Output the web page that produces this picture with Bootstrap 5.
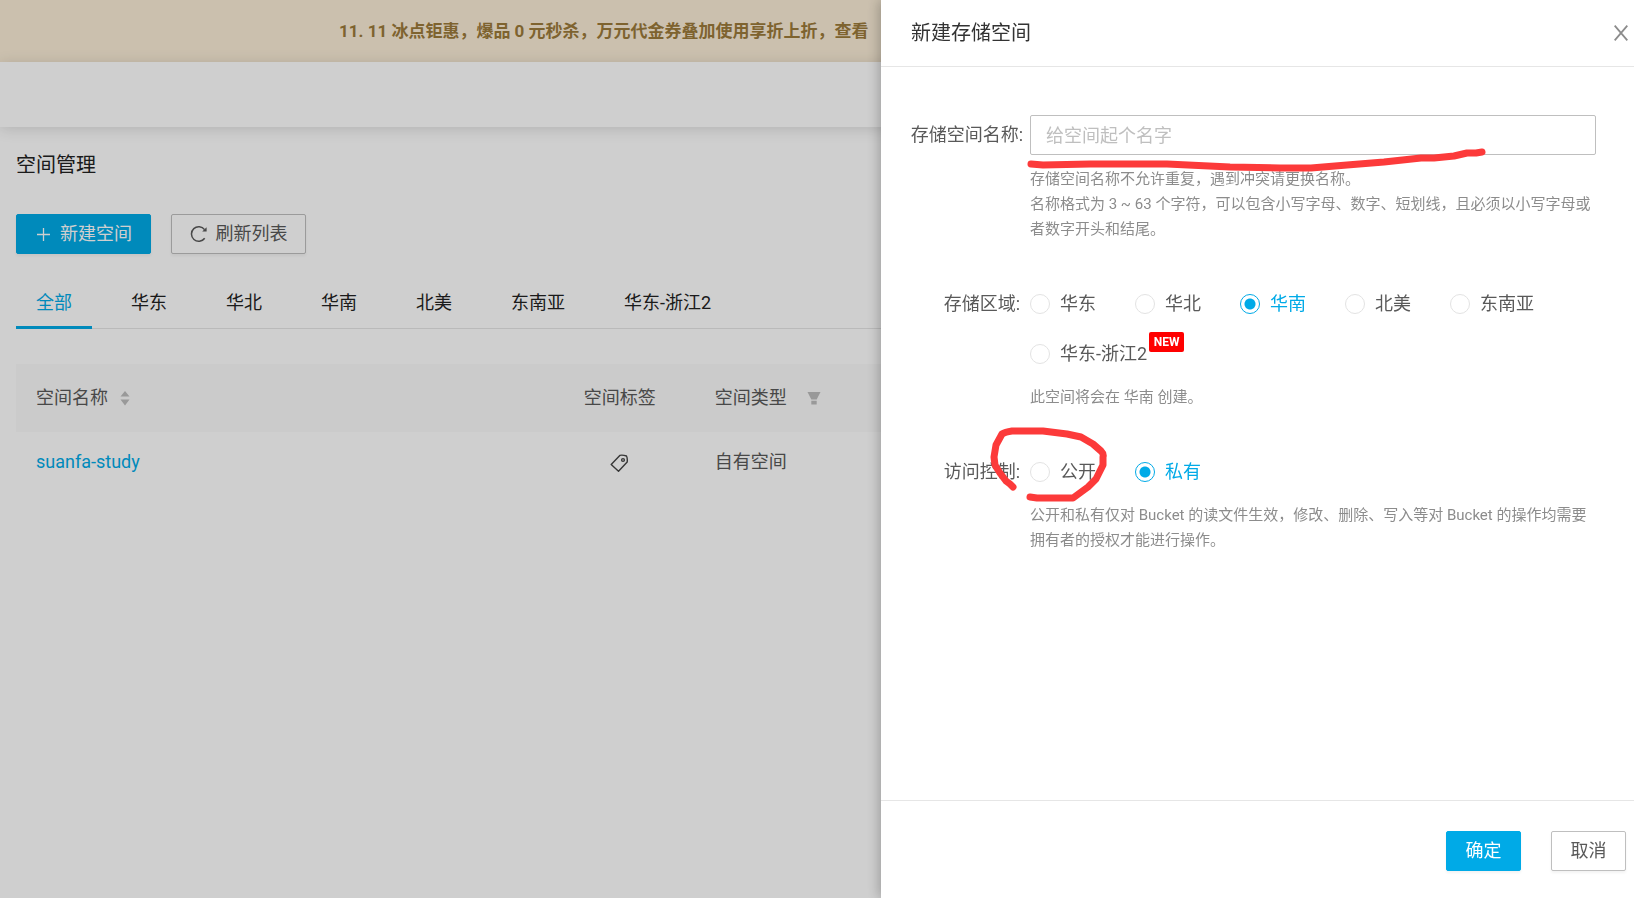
<!DOCTYPE html>
<html lang="zh-CN">
<head>
<meta charset="utf-8">
<meta name="viewport" content="width=device-width, initial-scale=1">
<title>空间管理</title>
<link href="https://cdn.jsdelivr.net/npm/bootstrap@5.3.0/dist/css/bootstrap.min.css" rel="stylesheet">
<style>
:root{--brand:#00aae7}
body{font-family:Roboto,"Noto Sans CJK SC",sans-serif;font-size:18px;line-height:26px;color:#595959;background:#fff;min-height:100vh;overflow:hidden}
.promo{height:62px;padding-left:339px;background:#faedd7;color:#9c7a3a;font-size:17px;font-weight:700}
.topbar{height:65px;box-shadow:0 2px 14px rgba(0,0,0,.14)}
.page-title{font-size:20px;line-height:28px;color:#222;font-weight:400}
.toolbar{margin-top:35px;gap:20px}
.act{height:40px;padding:0 18px;min-width:75px;border-radius:2px;font-size:18px;line-height:26px;box-shadow:0 2px 3px rgba(0,0,0,.05);white-space:nowrap}
.act-main{--bs-btn-color:#fff;--bs-btn-bg:#00aae7;--bs-btn-border-color:#00aae7}
.act-plain{--bs-btn-color:#595959;--bs-btn-bg:#fff;--bs-btn-border-color:#bfbfbf}
.tool{width:135px;padding:0}
.region-tabs{gap:19px;margin-top:23px;border-bottom:1px solid #e5e5e5}
.region-tabs .nav-link{padding:13px 20px 10px;color:#222;border-bottom:3px solid transparent;margin-bottom:-1px}
.region-tabs .nav-link.active{color:var(--brand);border-color:var(--brand)}
.buckets{table-layout:fixed;color:#595959;margin-top:35px}
.buckets th{font-weight:400;height:68px;background:#fafafa}
.buckets td{height:60px}
.buckets th,.buckets td{padding:0 20px;border:0;vertical-align:middle;color:#595959}
.col-fixed{width:150px}
.buckets a{color:var(--brand);text-decoration:none}
.offcanvas-backdrop.show{opacity:.19}
.offcanvas.drawer{--bs-offcanvas-width:753px;border:0;color:#595959;box-shadow:-2px 0 12px rgba(0,0,0,.25)}
.drawer-head{height:67px;padding:0 6px 0 30px;border-bottom:1px solid #e6e6e6}
.drawer-head h2{font-size:20px;line-height:28px;font-weight:400;color:#333}
.drawer-body{padding:48px 38px 0 29px}
.drawer-foot{padding:30px 8px 27px;gap:30px;border-top:1px solid #e6e6e6}
.fields{gap:37px}
.field-name{width:120px;padding-right:7px;text-align:right;white-space:nowrap;flex:none}
.field-name.tall{line-height:50px;padding-right:10px}
.field-name.mid{line-height:40px}
.name-box{height:40px;padding:0 15px;border:1px solid #bfbfbf;border-radius:2px;font-size:18px;color:#595959}
.name-box::placeholder{color:#bfbfbf}
.hint{font-size:15px;line-height:25px;color:#8c8c8c;margin-top:6px}
.hint.wide{margin-top:12px}
.options{column-gap:39px}
.option{height:50px;gap:10px}
.option .form-check-input{width:20px;height:20px;margin:0;border:1px solid #e3e3e3;box-shadow:none}
.option .form-check-input:checked{background:#fff radial-gradient(circle,#00aae7 5px,transparent 6px);border-color:var(--brand)}
.option .form-check-input:checked + label{color:var(--brand)}
.tag-new{margin:3px 0 0 -8px;width:35px;height:20px;border-radius:2px;background:#f00;color:#fff;font-size:12px;line-height:20px;font-weight:700;text-align:center}
.pen{position:absolute;overflow:visible;pointer-events:none;fill:none;stroke:#fc3a3a;stroke-width:7;stroke-linecap:round;stroke-linejoin:round;left:0;top:0}
</style>
</head>
<body>
<div class="promo d-flex align-items-center text-nowrap">11. 11 冰点钜惠，爆品 0 元秒杀，万元代金券叠加使用享折上折，查看</div>
<header class="topbar"></header>
<main class="px-3">
  <h1 class="page-title mb-0 pt-4">空间管理</h1>
  <div class="d-flex toolbar">
    <button type="button" class="btn act act-main tool d-flex align-items-center justify-content-center gap-2">
      <svg width="17" height="17" viewBox="0 0 17 17" fill="none" stroke="currentColor" stroke-width="1.3"><path d="M8.500 2v13M2 8.500h13"/></svg>新建空间</button>
    <button type="button" class="btn act act-plain tool d-flex align-items-center justify-content-center gap-2">
      <svg width="18" height="18" viewBox="0 0 18 18" fill="none" stroke="currentColor" stroke-width="1.500"><path d="M14.700 13.200A7.300 7.300 0 1 1 14.600 4.600"/><path d="M16.600 2.300v4.300h-4.400z" fill="currentColor" stroke="none"/></svg>刷新列表</button>
  </div>
  <nav class="nav region-tabs">
    <a class="nav-link active" href="#">全部</a>
    <a class="nav-link" href="#">华东</a>
    <a class="nav-link" href="#">华北</a>
    <a class="nav-link" href="#">华南</a>
    <a class="nav-link" href="#">北美</a>
    <a class="nav-link" href="#">东南亚</a>
    <a class="nav-link" href="#">华东-浙江2</a>
  </nav>
  <table class="table buckets mb-0">
    <colgroup><col style="width:33%"><col class="col-fixed"><col class="col-fixed"><col></colgroup>
    <thead><tr>
      <th scope="col"><span class="d-inline-flex align-items-center gap-2">空间名称
        <svg class="ms-1" width="10" height="16" viewBox="0 0 10 16" fill="#bdbdbd"><path d="M5 1l4.500 5.500h-9zM5 15.500L.5 9.500h9z"/></svg></span></th>
      <th scope="col" class="text-center">空间标签</th>
      <th scope="col"><span class="d-flex align-items-center justify-content-between pe-1">空间类型
        <svg width="14" height="14" viewBox="0 0 14 14" fill="#bdbdbd"><path d="M.5 1h13L9.700 8.500H4.300zM4.300 9.800h5.400v3.700H4.300z"/></svg></span></th>
      <th></th>
    </tr></thead>
    <tbody><tr>
      <td><a href="#">suanfa-study</a></td>
      <td class="text-center"><svg width="19" height="19" viewBox="0 0 19 19" fill="none" stroke="#444" stroke-width="1.400" stroke-linejoin="round"><path d="M1.200 10.500L9.800 1.400Q12.500.7 16.500 2Q17.600 4 17.200 8L8.500 17.300z"/><circle cx="13" cy="6" r="1.400"/></svg></td>
      <td>自有空间</td>
      <td></td>
    </tr></tbody>
  </table>
</main>

<div class="offcanvas-backdrop show"></div>
<aside class="offcanvas offcanvas-end show drawer" data-bs-backdrop="false" tabindex="-1" aria-labelledby="drawerTitle">
  <div class="drawer-head d-flex align-items-center justify-content-between">
    <h2 id="drawerTitle" class="mb-0">新建存储空间</h2>
    <button type="button" class="btn p-0 border-0 lh-1" aria-label="关闭"><svg width="14" height="16" viewBox="0 0 14 16" fill="none" stroke="#8c8c8c" stroke-width="1.800"><path d="M.7.7l12.600 14.600M13.300.7L.7 15.300"/></svg></button>
  </div>
  <form class="drawer-body flex-grow-1 d-flex flex-column fields">
    <div class="d-flex">
      <label class="field-name mid" for="bucketName">存储空间名称:</label>
      <div class="flex-grow-1 position-relative">
        <input id="bucketName" type="text" class="form-control name-box" placeholder="给空间起个名字">
        <div class="hint wide">存储空间名称不允许重复，遇到冲突请更换名称。<br>名称格式为 3 ~ 63 个字符，可以包含小写字母、数字、短划线，且必须以小写字母或者数字开头和结尾。</div>
        <svg class="pen" width="460" height="60"><path d="M1 49L13 50L60 49H137L200 52L250 53H281L317 50L354 47L391 43H404L424 41L437 38H446L452 37"/></svg>
      </div>
    </div>
    <div class="d-flex" role="radiogroup" aria-labelledby="regionName">
      <div class="field-name tall" id="regionName">存储区域:</div>
      <div class="flex-grow-1">
        <div class="d-flex flex-wrap options">
          <div class="option d-flex align-items-center"><input class="form-check-input" type="radio" name="region" id="r1"><label for="r1">华东</label></div>
          <div class="option d-flex align-items-center"><input class="form-check-input" type="radio" name="region" id="r2"><label for="r2">华北</label></div>
          <div class="option d-flex align-items-center"><input class="form-check-input" type="radio" name="region" id="r3" checked><label for="r3">华南</label></div>
          <div class="option d-flex align-items-center"><input class="form-check-input" type="radio" name="region" id="r4"><label for="r4">北美</label></div>
          <div class="option d-flex align-items-center"><input class="form-check-input" type="radio" name="region" id="r5"><label for="r5">东南亚</label></div>
          <div class="option d-flex align-items-center"><input class="form-check-input" type="radio" name="region" id="r6"><label for="r6">华东-浙江2</label><span class="tag-new align-self-start">NEW</span></div>
        </div>
        <div class="hint">此空间将会在 华南 创建。</div>
      </div>
    </div>
    <div class="d-flex" role="radiogroup" aria-labelledby="accessName">
      <div class="field-name tall" id="accessName">访问控制:</div>
      <div class="flex-grow-1 position-relative">
        <div class="d-flex flex-wrap options">
          <div class="option d-flex align-items-center"><input class="form-check-input" type="radio" name="access" id="a1"><label for="a1">公开</label></div>
          <div class="option d-flex align-items-center"><input class="form-check-input" type="radio" name="access" id="a2" checked><label for="a2">私有</label></div>
        </div>
        <div class="hint">公开和私有仅对 Bucket 的读文件生效，修改、删除、写入等对 Bucket 的操作均需要拥有者的授权才能进行操作。</div>
        <svg class="pen" width="80" height="60"><path d="M-17 40L-20 37L-24 34L-30 26L-35 18L-36 10L-34 -2L-28 -13Q-25 -15 -18 -16H13L37 -13L51 -10L63 -3L71 4Q74 7 73 10V18L66 32L58 40L43 51H7L0 50"/></svg>
      </div>
    </div>
  </form>
  <div class="drawer-foot d-flex justify-content-end">
    <button type="button" class="btn act act-main">确定</button>
    <button type="button" class="btn act act-plain">取消</button>
  </div>
</aside>
<script src="https://cdn.jsdelivr.net/npm/bootstrap@5.3.0/dist/js/bootstrap.bundle.min.js"></script>
</body>
</html>
